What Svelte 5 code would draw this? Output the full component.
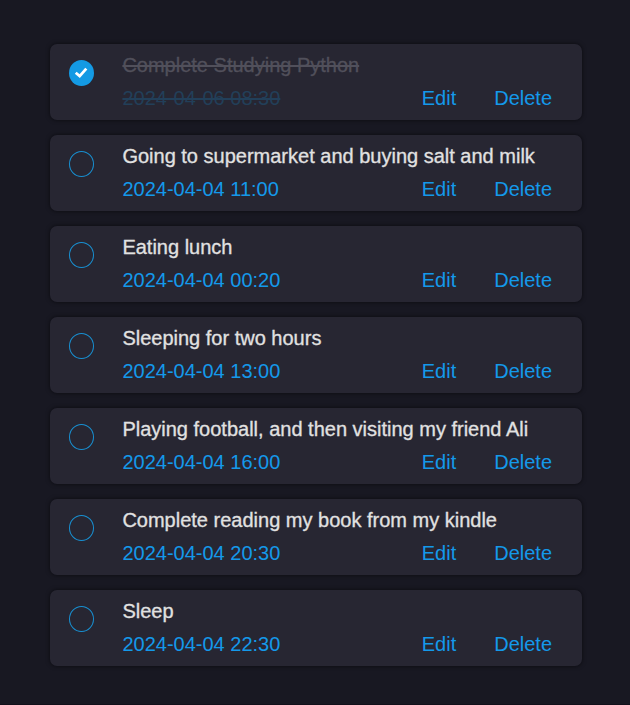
<script>
  let tasks = $state([
    { title: 'Complete Studying Python', date: '2024-04-06 08:30', done: true },
    { title: 'Going to supermarket and buying salt and milk', date: '2024-04-04 11:00', done: false },
    { title: 'Eating lunch', date: '2024-04-04 00:20', done: false },
    { title: 'Sleeping for two hours', date: '2024-04-04 13:00', done: false },
    { title: 'Playing football, and then visiting my friend Ali', date: '2024-04-04 16:00', done: false },
    { title: 'Complete reading my book from my kindle', date: '2024-04-04 20:30', done: false },
    { title: 'Sleep', date: '2024-04-04 22:30', done: false }
  ]);
</script>

<main>
  {#each tasks as task}
    <article class:done={task.done}>
      <button class="check" aria-label="Toggle task" onclick={() => (task.done = !task.done)}>
        {#if task.done}
          <svg viewBox="0 0 25 26"><path d="M6.7 12.7 L10.7 16.1 L17.3 8.6" /></svg>
        {/if}
      </button>
      <div class="body">
        <div class="title">{task.title}</div>
        <div class="row">
          <span class="date">{task.date}</span>
          <button class="link edit">Edit</button>
          <button class="link">Delete</button>
        </div>
      </div>
    </article>
  {/each}
</main>

<style>
  :global(body) {
    background: #181822;
  }
  main {
    box-sizing: border-box;
    height: 705px;
    padding: 44px 48px 0 50px;
    display: flex;
    flex-direction: column;
    gap: 15px;
    border-bottom: 1px solid #12101b;
    font: 20px/24px 'Liberation Sans', Arial, sans-serif;
    overflow: hidden;
  }
  article {
    box-sizing: border-box;
    height: 76px;
    flex: none;
    display: flex;
    align-items: flex-start;
    padding: 9px 30px 0 19px;
    border-radius: 7px;
    background: #272632;
    box-shadow: 0 0 4px rgba(0, 0, 0, 0.6);
  }
  button {
    font: inherit;
    background: none;
    border: 0;
    padding: 0;
    cursor: pointer;
  }
  .check {
    box-sizing: border-box;
    width: 25px;
    height: 26px;
    margin-top: 7px;
    border: 1px solid #1890d2;
    border-radius: 50%;
    flex: none;
  }
  .done .check {
    background: #149ae4;
    border: 0;
  }
  svg {
    display: block;
    width: 25px;
    height: 26px;
  }
  path {
    fill: none;
    stroke: #fff;
    stroke-width: 2.8;
  }
  .body {
    flex: 1;
    margin-left: 28.4px;
  }
  .title {
    color: #e1e1e1;
    -webkit-text-stroke: 0.3px;
    white-space: nowrap;
  }
  .row {
    display: flex;
    margin-top: 9px;
  }
  .date,
  .link {
    color: #1499ea;
  }
  .edit {
    margin-left: auto;
    margin-right: 38px;
  }
  .done .title,
  .done .date {
    width: max-content;
    text-decoration: line-through;
    text-decoration-thickness: 2px;
  }
  .done .title {
    color: #51505b;
  }
  .done .date {
    color: #223f59;
  }
</style>
